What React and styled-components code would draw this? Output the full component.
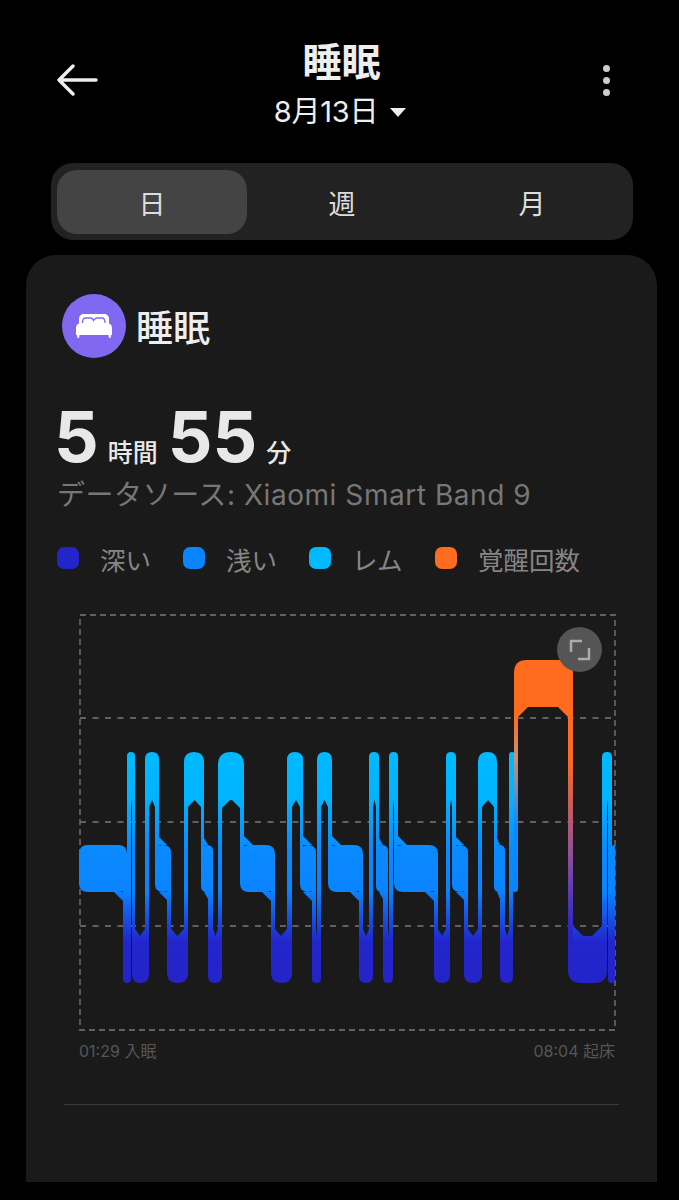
import React from 'react';
import styled, { createGlobalStyle } from 'styled-components';

const GlobalStyle = createGlobalStyle`
  html, body {
    margin: 0;
    background: #000;
  }
  body {
    font-family: Inter, "Noto Sans CJK JP", sans-serif;
    overflow: hidden;
  }
`;

const Page = styled.div`
  width: 679px;
  height: 1200px;
  box-sizing: border-box;
  padding-top: 29px;
  background: #000;
  overflow: hidden;
`;

const Header = styled.header`
  display: grid;
  grid-template-columns: 198px 170px 185px;
  align-items: center;
  height: 102px;
  padding-left: 57px;
`;

const HeaderCenter = styled.div`
  display: flex;
  flex-direction: column;
  align-items: center;
  padding-top: 7px;
  color: #eee;
`;

const Title = styled.div`
  margin-left: 3px;
  font-size: 39px;
  line-height: 52px;
  font-weight: 700;
  color: #eee;
`;

const DateRow = styled.div`
  display: flex;
  align-items: center;
  gap: 12px;
  margin-top: 5px;
  font-size: 29px;
  line-height: 38px;
  letter-spacing: -0.2px;
  white-space: nowrap;
`;

const Caret = styled.span`
  width: 0;
  height: 0;
  border-left: 8px solid transparent;
  border-right: 8px solid transparent;
  border-top: 9px solid #eee;
`;

const Dots = styled.div`
  display: flex;
  flex-direction: column;
  justify-self: end;
  gap: 5px;
`;

const Dot = styled.span`
  width: 7px;
  height: 7px;
  border-radius: 50%;
  background: #ccc;
`;

const Tabs = styled.div`
  display: grid;
  grid-template-columns: repeat(3, 190px);
  height: 64px;
  margin: 32px 46px 0 51px;
  padding: 7px 6px 6px;
  background: #222;
  border-radius: 22px;
`;

const Tab = styled.div`
  display: flex;
  align-items: center;
  justify-content: center;
  font-size: 27px;
  color: #ddd;
  border-radius: 20px;
  background: ${(p) => (p.$active ? '#444' : 'transparent')};
`;

const Card = styled.section`
  height: 927px;
  box-sizing: border-box;
  margin: 15px 22px 0 26px;
  padding: 39px 38px 0 32px;
  background: #1a1a1a;
  border-radius: 30px 30px 0 0;
`;

const CardHead = styled.div`
  display: flex;
  align-items: center;
  gap: 10px;
  margin-left: 4px;
`;

const IconCircle = styled.div`
  display: flex;
  align-items: center;
  justify-content: center;
  width: 64px;
  height: 64px;
  border-radius: 50%;
  background: #8069f0;
`;

const CardTitle = styled.div`
  font-size: 37px;
  font-weight: 500;
  color: #eee;
`;

const Duration = styled.div`
  display: flex;
  align-items: baseline;
  margin: 41px 0 0 -4px;
  height: 76px;
  color: #e8e8e8;
`;

const BigNumber = styled.span`
  font-size: 70px;
  line-height: 76px;
  font-weight: 700;
  margin-right: ${(p) => p.$gap}px;
`;

const Unit = styled.span`
  font-size: 25px;
  font-weight: 500;
  margin-right: ${(p) => p.$gap}px;
`;

const Source = styled.div`
  margin: 0 0 0 -1px;
  font-size: 28px;
  line-height: 40px;
  letter-spacing: 0.55px;
  color: #777;
  white-space: nowrap;
`;

const Legend = styled.div`
  display: flex;
  margin: 23px 0 0 -1px;
  height: 40px;
  align-items: center;
`;

const LegendItem = styled.div`
  display: flex;
  align-items: center;
  width: 126px;
  flex: none;
  gap: 21px;
  font-size: 25.5px;
  color: #868686;
  white-space: nowrap;
`;

const Swatch = styled.span`
  width: 22px;
  height: 22px;
  flex: none;
  border-radius: 7px;
  background: ${(p) => p.$color};
`;

const ChartWrap = styled.div`
  position: relative;
  width: 537px;
  height: 417px;
  margin: 36px 0 0 21px;
`;

const ChartSvg = styled.svg`
  display: block;
`;

const ExpandButton = styled.div`
  position: absolute;
  top: 13px;
  right: 14px;
  display: flex;
  align-items: center;
  justify-content: center;
  width: 45px;
  height: 45px;
  border-radius: 50%;
  background: #555;
`;

const TimeRow = styled.div`
  display: flex;
  justify-content: space-between;
  width: 536px;
  margin: 9px 0 0 21px;
  font-size: 16px;
  line-height: 22px;
  color: #565656;
`;

const Divider = styled.hr`
  height: 1px;
  margin: 42px 0 0 6px;
  width: 555px;
  border: 0;
  background: #3a3a3a;
`;

// chart data, x values in page px
const BANDS = {
  A: [660, 707],
  R: [752, 800],
  L: [845, 892],
  D: [936, 983],
};

const BLOCKS = [
  [79, 127, 'L'], [123, 131, 'D'], [127, 135, 'R'], [132, 149, 'D'], [145, 159, 'R'],
  [155, 171, 'L'], [167, 188, 'D'], [184, 204, 'R'], [201, 213, 'L'], [208, 222, 'D'],
  [218, 244, 'R'], [240, 275, 'L'], [271, 292, 'D'], [287, 303, 'R'], [300, 316, 'L'],
  [312, 321, 'D'], [317, 332, 'R'], [328, 363, 'L'], [359, 373, 'D'], [369, 379, 'R'],
  [376, 388, 'L'], [383, 393, 'D'], [389, 398, 'R'], [394, 438, 'L'], [434, 450, 'D'],
  [446, 456, 'R'], [452, 468, 'L'], [464, 482, 'D'], [478, 497, 'R'], [494, 505, 'L'],
  [500, 513, 'D'], [509, 515, 'R'], [512, 518, 'L'], [514, 573, 'A'], [568, 607, 'D'],
  [602, 612, 'R'], [608, 615, 'D'], [612, 615, 'L'],
];

function blockPath([x0, x1, level]) {
  const [t, b] = BANDS[level];
  const w = x1 - x0;
  const r = Math.min(level === 'L' ? 9 : 13, w / 2);
  const top = level === 'D' ? 0 : r;
  const bot = level === 'D' || level === 'L' ? r : 0;
  return (
    `M${x0 + top} ${t}H${x1 - top}Q${x1} ${t} ${x1} ${t + top}` +
    `V${b - bot}Q${x1} ${b} ${x1 - bot} ${b}H${x0 + bot}Q${x0} ${b} ${x0} ${b - bot}` +
    `V${t + top}Q${x0} ${t} ${x0 + top} ${t}Z`
  );
}

// diagonal fill where a block meets the riser beside it, meets in a point on narrow blocks
function chamferPath(block, prev, next, side) {
  const [x0, x1, level] = block;
  const [t, b] = BANDS[level];
  const neighbour = side === 'left' ? prev : next;
  if (!neighbour) return null;
  const innerL = prev ? Math.max(x0, prev[1]) : x0;
  const innerR = next ? Math.min(x1, next[0]) : x1;
  const gap = Math.max(0, innerR - innerL);
  // light blocks slope across their whole width, the rest stop halfway
  const c = level === 'L' ? Math.min(9, gap) : Math.min(level === 'R' ? 8 : 10, gap / 2);
  if (c <= 0) return null;
  const above = BANDS[neighbour[2]][0] < t;
  const y = above ? t : b;
  const rise = Math.max(c, 7);
  const d = above ? -rise : rise;
  const ex = side === 'left' ? innerL : innerR;
  const dir = side === 'left' ? c : -c;
  return `M${ex} ${y}L${ex + dir} ${y}L${ex} ${y + d}Z`;
}

function blockFill(level) {
  return level === 'A' ? '#ff6b1f' : 'url(#sleepGrad)';
}

function connectors() {
  const out = [];
  for (let i = 0; i < BLOCKS.length - 1; i++) {
    const a = BLOCKS[i];
    const b = BLOCKS[i + 1];
    const top = Math.min(BANDS[a[2]][0], BANDS[b[2]][0]) + 24;
    const bottom = Math.max(BANDS[a[2]][1], BANDS[b[2]][1]) - 24;
    let fill = 'url(#sleepGrad)';
    if (a[2] === 'A') fill = 'url(#awakeRight)';
    if (b[2] === 'A') fill = 'url(#awakeLeft)';
    out.push({ x: b[0], y: top, w: a[1] - b[0], h: bottom - top, fill });
  }
  return out;
}

const H_LINES = [718, 822, 926];

const SleepChart = () => (
  <ChartSvg width="537" height="417" viewBox="79 614 537 417">
    <defs>
      <linearGradient id="sleepGrad" gradientUnits="userSpaceOnUse" x1="0" y1="752" x2="0" y2="983">
        <stop offset="0" stopColor="#00baff" />
        <stop offset="0.2" stopColor="#00b4ff" />
        <stop offset="0.42" stopColor="#0a8aff" />
        <stop offset="0.6" stopColor="#0a84ff" />
        <stop offset="0.82" stopColor="#2226cc" />
        <stop offset="1" stopColor="#2424c8" />
      </linearGradient>
      <linearGradient id="awakeLeft" gradientUnits="userSpaceOnUse" x1="0" y1="660" x2="0" y2="892">
        <stop offset="0" stopColor="#ff6b1f" />
        <stop offset="0.25" stopColor="#ff6b1f" />
        <stop offset="0.42" stopColor="#cf8e74" />
        <stop offset="0.72" stopColor="#0a8aff" />
      </linearGradient>
      <linearGradient id="awakeRight" gradientUnits="userSpaceOnUse" x1="0" y1="660" x2="0" y2="983">
        <stop offset="0" stopColor="#ff6b1f" />
        <stop offset="0.3" stopColor="#ff6b1f" />
        <stop offset="0.6" stopColor="#90509a" />
        <stop offset="0.85" stopColor="#2424c8" />
      </linearGradient>
    </defs>

    <path
      d="M80 615H615V1030H80Z"
      fill="none"
      stroke="#606060"
      strokeWidth="1.8"
      strokeDasharray="6 4"
    />
    {H_LINES.map((y) => (
      <line key={y} x1="80" x2="615" y1={y} y2={y} stroke="#606060" strokeWidth="1.8" strokeDasharray="6 6.5" />
    ))}

    {BLOCKS.map((b, i) => {
      const prev = BLOCKS[i - 1];
      const next = BLOCKS[i + 1];
      return (
        <g key={i} fill={blockFill(b[2])}>
          <path d={blockPath(b)} />
          <path d={chamferPath(b, prev, next, 'left') || undefined} />
          <path d={chamferPath(b, prev, next, 'right') || undefined} />
        </g>
      );
    })}
    {connectors().map((c, i) => (
      <rect key={i} x={c.x} y={c.y} width={c.w} height={c.h} fill={c.fill} />
    ))}
  </ChartSvg>
);

const BedIcon = () => (
  <svg width="36" height="24" viewBox="0 0 36 24">
    <path d="M3 10V5c0-3 2-5 5-5h20c3 0 5 2 5 5v5z" fill="#fff" />
    <path
      d="M6.500 9c0-3 1-5 3-5h5c1.500 0 2.500 1 3 2.500C18.500 5 19.500 4 21 4h5c2 0 3 2 3 5"
      fill="none"
      stroke="#8069f0"
      strokeWidth="1.3"
    />
    <path
      d="M4 9.500h28c2.500 0 4 2 4 4.500v7h-1l-.5 3h-1.500l-.5-3H3.500l-.5 3H1.500L1 21H0v-7c0-2.500 1.500-4.500 4-4.500z"
      fill="#fff"
    />
  </svg>
);

const LEGEND = [
  { label: '深い', color: '#2226c8' },
  { label: '浅い', color: '#0a84ff' },
  { label: 'レム', color: '#00b9ff' },
  { label: '覚醒回数', color: '#ff6b1f' },
];

const App = () => {
  return (
    <Page>
      <GlobalStyle />
      <Header>
        <svg width="42" height="34" viewBox="0 0 42 34" fill="none" stroke="#eee" strokeWidth="3.4" strokeLinecap="round" strokeLinejoin="round">
          <path d="M39 17H3M16 3L2 17l14 14" />
        </svg>
        <HeaderCenter>
          <Title>睡眠</Title>
          <DateRow>
            8月13日
            <Caret />
          </DateRow>
        </HeaderCenter>
        <Dots>
          <Dot />
          <Dot />
          <Dot />
        </Dots>
      </Header>

      <Tabs>
        <Tab $active>日</Tab>
        <Tab>週</Tab>
        <Tab>月</Tab>
      </Tabs>

      <Card>
        <CardHead>
          <IconCircle>
            <BedIcon />
          </IconCircle>
          <CardTitle>睡眠</CardTitle>
        </CardHead>

        <Duration>
          <BigNumber $gap={9}>5</BigNumber>
          <Unit $gap={10}>時間</Unit>
          <BigNumber $gap={9}>55</BigNumber>
          <Unit>分</Unit>
        </Duration>
        <Source>データソース: Xiaomi Smart Band 9</Source>

        <Legend>
          {LEGEND.map((l) => (
            <LegendItem key={l.label}>
              <Swatch $color={l.color} />
              {l.label}
            </LegendItem>
          ))}
        </Legend>

        <ChartWrap>
          <SleepChart />
          <ExpandButton>
            <svg width="22" height="22" viewBox="0 0 22 22" fill="none" stroke="#aaa" strokeWidth="2.5">
              <path d="M2 13V2h11M20 9v11H9" />
            </svg>
          </ExpandButton>
        </ChartWrap>
        <TimeRow>
          <span>01:29 入眠</span>
          <span>08:04 起床</span>
        </TimeRow>
        <Divider />
      </Card>
    </Page>
  );
};

export default App;
